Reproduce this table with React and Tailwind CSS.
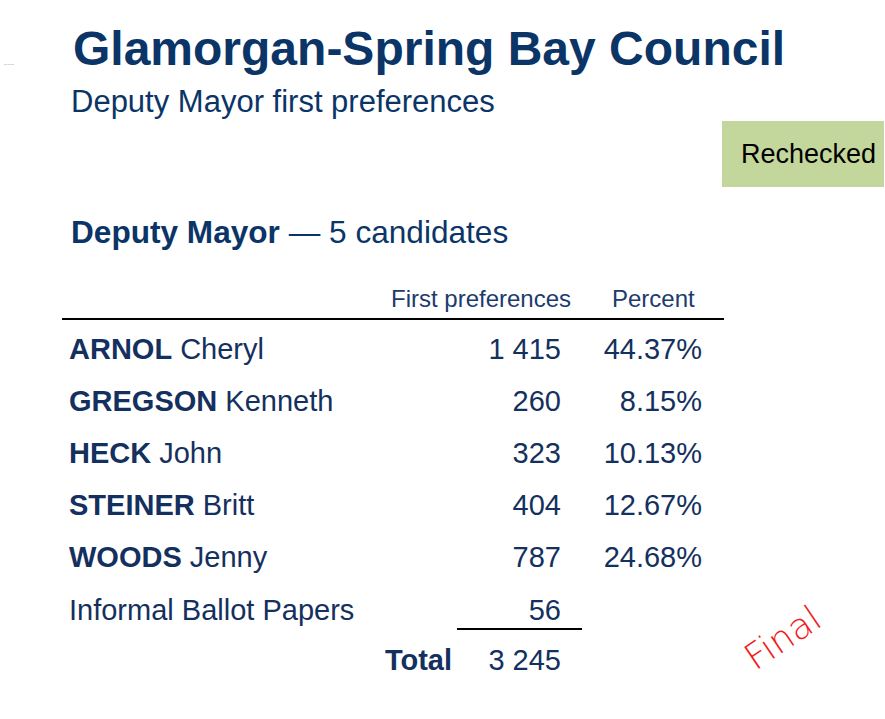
const rows = [
    { last: 'ARNOL', first: 'Cheryl', votes: '1 415', pct: '44.37%' },
    { last: 'GREGSON', first: 'Kenneth', votes: '260', pct: '8.15%' },
    { last: 'HECK', first: 'John', votes: '323', pct: '10.13%' },
    { last: 'STEINER', first: 'Britt', votes: '404', pct: '12.67%' },
    { last: 'WOODS', first: 'Jenny', votes: '787', pct: '24.68%' },
];

export default function App() {
    return (
        <div className="relative w-[885px] h-[719px] bg-white overflow-hidden font-['Liberation_Sans',Arial,sans-serif]">
            {/* faint marks at left edge */}
            <div className="absolute left-[4px] top-[64px] w-[10px] border-t border-dashed border-gray-300" />

            {/* Title */}
            <div className="pl-[71px] pt-[25px] text-[#0b3567]">
                <h1 className="ml-[2px] text-[48px] leading-[47px] font-bold">Glamorgan-Spring Bay Council</h1>
                <p className="mt-[15px] text-[31px] leading-[30px]">Deputy Mayor first preferences</p>
            </div>

            {/* Status tag */}
            <div className="flex justify-end mt-[4px] pr-[1px]">
                <div className="w-[162px] h-[66px] bg-[#c3d69b] pl-[19px] pt-[20px]">
                    <span className="block text-[27px] leading-[27px] text-black">Rechecked</span>
                </div>
            </div>

            {/* Section heading */}
            <h2 className="mt-[30px] pl-[71px] text-[31.6px] leading-[31px] text-[#0b3567]">
                <span className="font-bold">Deputy Mayor</span> — 5 candidates
            </h2>

            {/* Table */}
            <div className="ml-[62px] w-[662px] text-[#14305e]">
                <div className="flex mt-[39px] pl-[329px] text-[24px] leading-[24px] text-[#1c3b6e] whitespace-nowrap">
                    <span className="w-[183px]">First preferences</span>
                    <span className="ml-[38px]">Percent</span>
                </div>
                <div className="mt-[7px] border-t-2 border-black" />

                <div className="mt-[2.5px] text-[29px] leading-[52.2px]">
                    {rows.map((r) => (
                        <div key={r.last} className="flex">
                            <div className="w-[395px] pl-[7px]">
                                <span className="font-bold">{r.last}</span> {r.first}
                            </div>
                            <div className="w-[125px] pr-[21px] text-right">{r.votes}</div>
                            <div className="w-[120px] text-right">{r.pct}</div>
                        </div>
                    ))}
                    <div className="flex">
                        <div className="w-[395px] pl-[7px]">Informal Ballot Papers</div>
                        <div className="w-[125px] pr-[21px] text-right">56</div>
                    </div>
                    <div className="ml-[395px] -mt-[8px] w-[125px] border-t-2 border-black" />
                    <div className="flex mt-[4.5px]">
                        <div className="w-[395px] pr-[5px] text-right font-bold">Total</div>
                        <div className="w-[125px] pr-[21px] text-right">3 245</div>
                    </div>
                </div>
            </div>

            {/* Stamp */}
            <div className="absolute left-[740px] top-[620px] w-[86px] text-center text-[36px] leading-[36px] text-[#f21a1a] -rotate-[34deg] font-['DejaVu_Sans',sans-serif] font-light">
                Final
            </div>
        </div>
    );
}
